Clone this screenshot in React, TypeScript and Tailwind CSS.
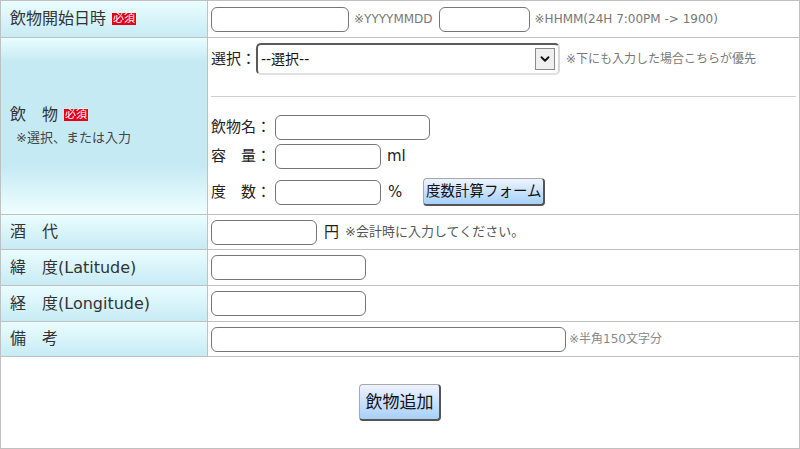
import { ChevronDown } from "lucide-react";

function Required() {
    return (
        <span className="ml-[6px] inline-block bg-[#e60012] px-[1px] text-[11px] leading-[12px] text-white">必須</span>
    );
}

function Field({ className }: { className: string }) {
    return <input type="text" className={`h-[25px] rounded-[6px] border border-[#767676] bg-white px-1 text-[14px] outline-none ${className}`} />;
}

function Label({ children, tall }: { children: React.ReactNode; tall?: boolean }) {
    return (
        <div
            className={
                tall
                    ? "flex w-[207px] shrink-0 flex-col justify-center border-r border-[#c0c0c0] bg-[linear-gradient(to_bottom,#e8fdff_0px,#c6eaf3_24px,#c6eaf3_128px,#effeff_100%)] pl-[9px] text-[16px] text-[#333]"
                    : "flex w-[207px] shrink-0 items-center border-r border-[#c0c0c0] bg-[linear-gradient(to_bottom,#eafdff,#c7ebf4)] pl-[9px] text-[16px] text-[#333]"
            }
        >
            {children}
        </div>
    );
}

export default function App() {
    return (
        <div className="h-[449px] w-[800px] border border-[#c0c0c0] bg-white font-['DejaVu_Sans','Noto_Sans_CJK_JP',sans-serif] text-[#222]">
            {/* 開始日時 */}
            <div className="flex h-[37px] border-b border-[#c0c0c0]">
                <Label>
                    <div className="flex items-center">
                        <span>飲物開始日時</span>
                        <Required />
                    </div>
                </Label>
                <div className="flex flex-1 items-center pl-[3px]">
                    <Field className="w-[138px]" />
                    <span className="ml-[5px] text-[12px] text-[#777]">※YYYYMMDD</span>
                    <Field className="ml-[6px] w-[91px]" />
                    <span className="ml-[5px] text-[12px] text-[#777]">※HHMM(24H 7:00PM -&gt; 1900)</span>
                </div>
            </div>

            {/* 飲物 */}
            <div className="flex h-[177px] border-b border-[#c0c0c0]">
                <Label tall>
                    <div className="flex items-center leading-[23px]">
                        <span>飲　物</span>
                        <Required />
                    </div>
                    <div className="pl-[6px] text-[13px] leading-[23px] text-[#444]">※選択、または入力</div>
                </Label>
                <div className="flex flex-1 flex-col pt-[5px] pr-[3px] pl-[3px] text-[15px]">
                    <div className="flex h-[32px] items-center">
                        <span>選択：</span>
                        <div className="flex h-[32px] w-[304px] items-center justify-between rounded-[5px] border-2 border-t-[#5a5a5a] border-r-[#d8d8d8] border-b-[#e0e0e0] border-l-[#5a5a5a] pr-[3px] pl-[3px]">
                            <span className="text-[14px] text-[#111]">--選択--</span>
                            <span className="flex h-[22px] w-[20px] items-center justify-center border border-[#8a8a8a] bg-[#efefef]">
                                <ChevronDown size={14} strokeWidth={3.2} className="text-[#111]" />
                            </span>
                        </div>
                        <span className="ml-[6px] text-[12px] text-[#777]">※下にも入力した場合こちらが優先</span>
                    </div>
                    <div className="mt-[21px] border-t border-[#cfcfcf]" />
                    <div className="mt-[18px] flex h-[25px] items-center">
                        <span className="w-[64px]">飲物名：</span>
                        <Field className="w-[155px]" />
                    </div>
                    <div className="mt-[4px] flex h-[25px] items-center">
                        <span className="w-[64px]">容　量：</span>
                        <Field className="w-[106px]" />
                        <span className="ml-[6px]">ml</span>
                    </div>
                    <div className="mt-[9px] flex h-[28px] items-center">
                        <span className="w-[64px]">度　数：</span>
                        <Field className="w-[106px]" />
                        <span className="ml-[7px]">%</span>
                        <button className="ml-[21px] h-[28px] w-[122px] rounded-[4px] border border-r-2 border-b-2 border-t-[#a8a8a8] border-r-[#555] border-b-[#555] border-l-[#a8a8a8] bg-linear-to-b from-[#eef4ff] to-[#a6d0fc] px-0 text-[14.5px] leading-none whitespace-nowrap text-[#111]">
                            度数計算フォーム
                        </button>
                    </div>
                </div>
            </div>

            {/* 酒代 */}
            <div className="flex h-[35px] border-b border-[#c0c0c0]">
                <Label>酒　代</Label>
                <div className="flex flex-1 items-center pl-[3px]">
                    <Field className="h-[24px] w-[106px]" />
                    <span className="ml-[7px] text-[15px]">円</span>
                    <span className="ml-[6px] text-[13px] text-[#555]">※会計時に入力してください。</span>
                </div>
            </div>

            {/* 緯度 */}
            <div className="flex h-[36px] border-b border-[#c0c0c0]">
                <Label>緯　度(Latitude)</Label>
                <div className="flex flex-1 items-center pl-[3px]">
                    <Field className="w-[155px]" />
                </div>
            </div>

            {/* 経度 */}
            <div className="flex h-[36px] border-b border-[#c0c0c0]">
                <Label>経　度(Longitude)</Label>
                <div className="flex flex-1 items-center pl-[3px]">
                    <Field className="w-[155px]" />
                </div>
            </div>

            {/* 備考 */}
            <div className="flex h-[35px] border-b border-[#c0c0c0]">
                <Label>備　考</Label>
                <div className="flex flex-1 items-center pl-[3px]">
                    <Field className="w-[355px]" />
                    <span className="ml-[3px] text-[12px] text-[#888]">※半角150文字分</span>
                </div>
            </div>

            <div className="flex h-[91px] items-center justify-center">
                <button className="h-[37px] w-[82px] rounded-[4px] border border-r-2 border-b-2 border-t-[#a8a8a8] border-r-[#555] border-b-[#555] border-l-[#a8a8a8] bg-linear-to-b from-[#eef2ff] to-[#a6d0fc] text-[17px] leading-none text-[#111]">
                    飲物追加
                </button>
            </div>
        </div>
    );
}
